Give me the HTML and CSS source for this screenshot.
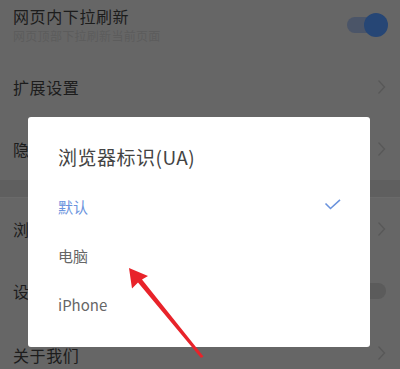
FILE: index.html
```html
<!DOCTYPE html>
<html lang="zh">
<head>
<meta charset="utf-8">
<link rel="stylesheet" href="styles.css">
</head>
<body>
<div class="page">
  <div class="list">
    <div class="row">
      <div class="texts">
        <div class="title">网页内下拉刷新</div>
        <div class="sub">网页顶部下拉刷新当前页面</div>
      </div>
      <div class="switch on"><span class="knob"></span></div>
    </div>
    <div class="row">
      <div class="title">扩展设置</div>
      <svg class="chev" width="9" height="16" viewBox="0 0 9 16"><path d="M1.5 1.5 L7.5 8 L1.5 14.5" fill="none" stroke="#585858" stroke-width="1.3"/></svg>
    </div>
    <div class="row">
      <div class="title">隐</div>
      <svg class="chev" width="9" height="16" viewBox="0 0 9 16"><path d="M1.5 1.5 L7.5 8 L1.5 14.5" fill="none" stroke="#585858" stroke-width="1.3"/></svg>
    </div>
    <div class="band"></div>
    <div class="row">
      <div class="title">浏</div>
      <svg class="chev" width="9" height="16" viewBox="0 0 9 16"><path d="M1.5 1.5 L7.5 8 L1.5 14.5" fill="none" stroke="#585858" stroke-width="1.3"/></svg>
    </div>
    <div class="row">
      <div class="title">设</div>
      <div class="switch off"><span class="knob"></span></div>
    </div>
    <div class="row">
      <div class="title tight">关于我们</div>
      <svg class="chev" width="9" height="16" viewBox="0 0 9 16"><path d="M1.5 1.5 L7.5 8 L1.5 14.5" fill="none" stroke="#585858" stroke-width="1.3"/></svg>
    </div>
  </div>

  <div class="dialog">
    <div class="dtitle">浏览器标识(UA)</div>
    <div class="opt selected">
      <span>默认</span>
      <svg width="18" height="12" viewBox="0 0 18 12"><path d="M1.5 4.5 L6.5 9.5 L16 0.8" fill="none" stroke="#6a93dd" stroke-width="1.6"/></svg>
    </div>
    <div class="opt"><span>电脑</span></div>
    <div class="opt"><span>iPhone</span></div>
  </div>

  <svg class="arrow" width="400" height="369" viewBox="0 0 400 369">
    <polygon points="129,268 148,276 142,279.5 203.5,356.5 201,358 138,282.6 132,288.5" fill="#e8232a"/>
  </svg>
</div>
</body>
</html>
```

FILE: styles.css
```css
html, body {
  margin: 0;
  padding: 0;
}
body {
  width: 400px;
  height: 369px;
  overflow: hidden;
  background: #666666;
  font-family: "Noto Sans CJK SC", "Noto Sans", sans-serif;
}
.page {
  position: relative;
  width: 400px;
  height: 369px;
  overflow: hidden;
}
.list {
  margin-top: -6px;
  display: flex;
  flex-direction: column;
}
.row {
  height: 62px;
  display: flex;
  align-items: center;
  justify-content: space-between;
  padding: 0 14px 0 13px;
  box-sizing: border-box;
}
.texts {
  display: flex;
  flex-direction: column;
  gap: 2px;
}
.title {
  font-size: 16px;
  line-height: 20px;
  color: #1c1c1c;
  letter-spacing: 0.6px;
}
.title.tight {
  line-height: 16px;
  margin-top: 4px;
}
.sub {
  font-size: 12px;
  line-height: 16px;
  color: #5c5c5c;
  letter-spacing: 0.3px;
}
.band {
  height: 17px;
  background: #5f5f5f;
  border-bottom: 1px solid #6a6a6a;
}
.chev {
  display: block;
}
.switch {
  position: relative;
  width: 39px;
  height: 16px;
  border-radius: 8px;
}
.switch.on {
  background: #4b5568;
}
.switch.off {
  background: #5b5b5b;
}
.switch .knob {
  position: absolute;
  top: -4px;
  right: -2px;
  width: 24px;
  height: 24px;
  border-radius: 50%;
  background: #264675;
}
.switch.off .knob {
  display: none;
}
.dialog {
  position: absolute;
  left: 28px;
  top: 117px;
  width: 342px;
  height: 230px;
  background: #ffffff;
  border-radius: 3px;
  box-sizing: border-box;
  padding: 27px 28px 0 30px;
}
.dtitle {
  font-size: 19px;
  line-height: 26px;
  color: #444444;
  letter-spacing: 0.5px;
  margin-bottom: 12px;
}
.opt {
  height: 49px;
  display: flex;
  align-items: center;
  justify-content: space-between;
  font-size: 15px;
  color: #666666;
}
.opt.selected {
  color: #6a93dd;
}
.opt svg {
  display: block;
  margin-top: -4px;
}
.arrow {
  position: absolute;
  left: 0;
  top: 0;
}
```
